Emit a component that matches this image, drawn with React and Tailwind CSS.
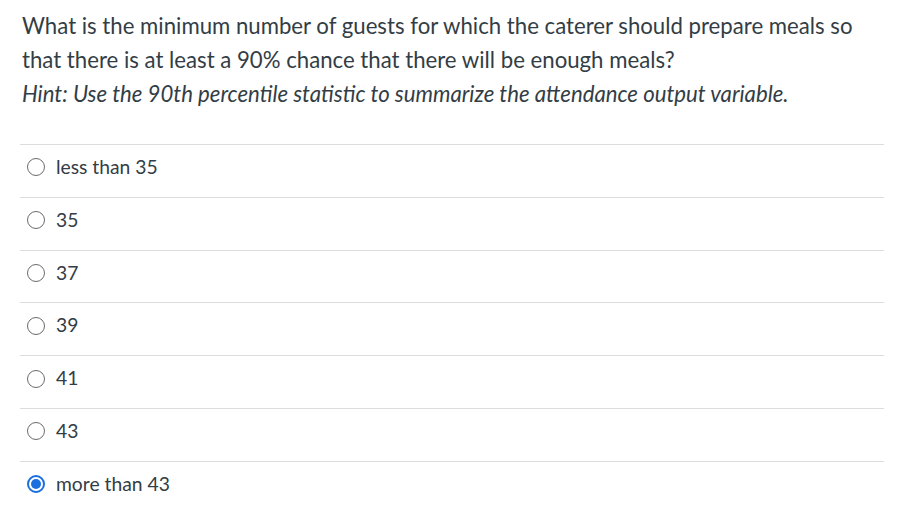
import React from "react";

const options = ["less than 35", "35", "37", "39", "41", "43", "more than 43"];

function Radio({ checked }) {
  if (checked) {
    return (
      <span className="flex h-[18px] w-[18px] shrink-0 items-center justify-center rounded-full border-2 border-[#1a6fe0] bg-white">
        <span className="h-[10px] w-[10px] rounded-full bg-[#1a6fe0]" />
      </span>
    );
  }
  return <span className="h-[18px] w-[18px] shrink-0 rounded-full border border-[#6b6b6b] bg-white" />;
}

export default function App() {
  return (
    <div className="min-h-[524px] w-[897px] bg-white text-[#333d45]" style={{ fontFamily: "Lato, 'Noto Sans', sans-serif" }}>
      <div className="pl-[22px] pr-3 pt-[9px] text-[22.2px] leading-[34px]">
        <p>What is the minimum number of guests for which the caterer should prepare meals so that there is at least a 90% chance that there will be enough meals?</p>
        <p className="italic">Hint: Use the 90th percentile statistic to summarize the attendance output variable.</p>
      </div>
      <div className="ml-[20px] mr-[13px] mt-[33px]">
        {options.map((o, i) => (
          <div key={o} className="flex h-[52.8px] items-center gap-[11px] border-t border-[#dcdcdc] pb-[7px] pl-[7px]">
            <Radio checked={i === options.length - 1} />
            <span className="text-[19.3px]">{o}</span>
          </div>
        ))}
      </div>
    </div>
  );
}
